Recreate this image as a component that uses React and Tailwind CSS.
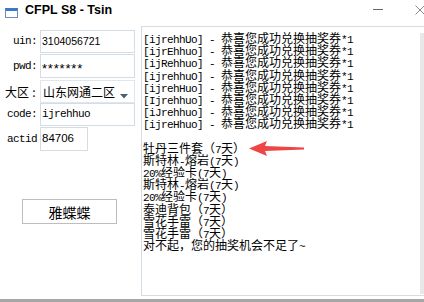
import React from "react";

const CJK = "font-['Noto_Sans_CJK_SC','Noto_Sans_CJK_JP',sans-serif]";

function Seg({ text }) {
  const parts = text.split(/([\x00-\x7f]+)/).filter(Boolean);
  return parts.map((p, i) =>
    /^[\x00-\x7f]+$/.test(p) ? (
      <span key={i} className="font-['Liberation_Mono',monospace] text-[11px] tracking-[-0.6px]">
        {p}
      </span>
    ) : (
      <span key={i} className={CJK + " text-[12px]"}>
        {p}
      </span>
    )
  );
}

const lines = [
  "[ijrehhUo] - 恭喜您成功兑换抽奖券*1",
  "[ijrEhhuo] - 恭喜您成功兑换抽奖券*1",
  "[ijRehhuo] - 恭喜您成功兑换抽奖券*1",
  "[ijrehhuO] - 恭喜您成功兑换抽奖券*1",
  "[ijrehHuo] - 恭喜您成功兑换抽奖券*1",
  "[Ijrehhuo] - 恭喜您成功兑换抽奖券*1",
  "[iJrehhuo] - 恭喜您成功兑换抽奖券*1",
  "[ijreHhuo] - 恭喜您成功兑换抽奖券*1",
  "",
  "牡丹三件套（7天）",
  "斯特林-熔岩(7天)",
  "20%经验卡(7天)",
  "斯特林-熔岩(7天)",
  "20%经验卡(7天)",
  "泰迪背包（7天）",
  "雪花手雷（7天）",
  "雪花手雷（7天）",
  "对不起，您的抽奖机会不足了~",
];

function Label({ children, className = "" }) {
  return (
    <div className={"w-[40px] pr-[3px] text-right whitespace-pre shrink-0 " + className}>
      {children}
    </div>
  );
}

export default function App() {
  return (
    <div className="relative w-[424px] h-[302px] overflow-hidden bg-white text-black flex flex-col">
      {/* title bar */}
      <div className="h-[25px] shrink-0 flex items-start relative">
        <div className="ml-[5px] mt-[8px] w-[13px] h-[10px] border border-[#6f8db5] border-t-[3px] border-t-[#3a78c8] bg-white" />
        <div className="ml-[7px] mt-[3px] font-['Liberation_Sans',sans-serif] font-bold text-[12.5px] leading-[15px] text-black">
          CFPL S8 - Tsin
        </div>
        <div className="absolute left-[373px] top-[9px] w-[10px] h-[1px] bg-[#6a6a6a]" />
        <svg className="absolute left-[415px] top-[5px]" width="10" height="10" viewBox="0 0 10 10">
          <path d="M0.5 0.5 L9.5 9.5 M9.5 0.5 L0.5 9.5" stroke="#8a8a8a" strokeWidth="1" fill="none" />
        </svg>
      </div>

      {/* body */}
      <div className="flex-1 flex items-start pt-[1px]">
        {/* left column */}
        <div className="w-[141px] shrink-0 flex flex-col">
          <div className="mt-[4px] flex items-center h-[23px]">
            <Label className="font-['Liberation_Mono',monospace] text-[11px] tracking-[-0.6px]">uin:</Label>
            <div className="w-[95px] h-[23px] border border-[#d3dde6] flex items-center pl-[1px] font-['Liberation_Sans',sans-serif] text-[10.5px]">
              3104056721
            </div>
          </div>
          <div className="mt-[1px] flex items-center h-[24px]">
            <Label className="font-['Liberation_Mono',monospace] text-[11px] tracking-[-0.6px]">pwd:</Label>
            <div className="w-[95px] h-[24px] border border-[#d3dde6] flex items-center pl-[1px] font-['Liberation_Sans',sans-serif] text-[13px] tracking-[0.8px]">
              <span className="translate-y-[3px]">*******</span>
            </div>
          </div>
          <div className="mt-[2px] flex items-center h-[23px]">
            <div className="w-[40px] shrink-0 flex items-center pl-[5px]">
              <span className={CJK + " text-[12px]"}>大区</span>
              <span className={CJK + " text-[12px] w-[10px] text-center"}>:</span>
            </div>
            <div className="w-[95px] h-[23px] border border-[#dfe6ec] flex items-center pl-[2px] relative">
              <span className={CJK + " text-[12px]"}>山东网通二区</span>
              <svg className="absolute left-[79px] top-[13px]" width="8" height="5" viewBox="0 0 8 5">
                <path d="M0 0 L8 0 L4 4.5 Z" fill="#4f5d70" />
              </svg>
            </div>
          </div>
          <div className="mt-[0px] flex items-center h-[23px]">
            <Label className="font-['Liberation_Mono',monospace] text-[11px] tracking-[-0.6px]">code:</Label>
            <div className="w-[95px] h-[23px] border border-[#d3dde6] flex items-center pl-[1px] font-['Liberation_Mono',monospace] text-[11px] tracking-[-0.6px]">
              ijrehhuo
            </div>
          </div>
          <div className="mt-[1px] flex items-start h-[24px]">
            <Label className="font-['Liberation_Mono',monospace] text-[11px] tracking-[-0.6px] pt-[4px]">actid</Label>
            <div className="w-[48px] h-[24px] border border-[#d3dde6] flex items-center pl-[1px] font-['Liberation_Sans',sans-serif] text-[11.5px]">
              84706
            </div>
          </div>
          <div className="mt-[48px] ml-[22px] w-[95px] h-[25px] border border-[#bdbdbd] bg-white flex items-center justify-center">
            <span className={CJK + " text-[14px] leading-[16px]"}>雅蝶蝶</span>
          </div>
        </div>

        {/* textarea */}
        <div className="w-[297px] h-[270px] shrink-0 border border-[#d3dde6] flex">
          <div className="flex-1 pl-[1px] pt-[4px] text-black">
            {lines.map((l, i) => (
              <div key={i} className="h-[12.2px] leading-[12.2px] whitespace-pre">
                <Seg text={l} />
              </div>
            ))}
          </div>
          <div className="w-[17px] shrink-0 flex flex-col">
            <div className="h-[6px]" />
            <div className="flex-1 bg-[#e8e8e8] mb-[1px]" />
          </div>
        </div>
      </div>

      <div className="h-[3px] shrink-0 bg-[#a6a6a6]" />

      {/* arrow overlay */}
      <svg className="absolute left-[249px] top-[140px]" width="56" height="17" viewBox="0 0 56 17">
        <path d="M0 8.5 L18 1 L16 6 L55 7.6 L55 9.4 L16 11 L18 16 Z" fill="#f04545" />
      </svg>
    </div>
  );
}
